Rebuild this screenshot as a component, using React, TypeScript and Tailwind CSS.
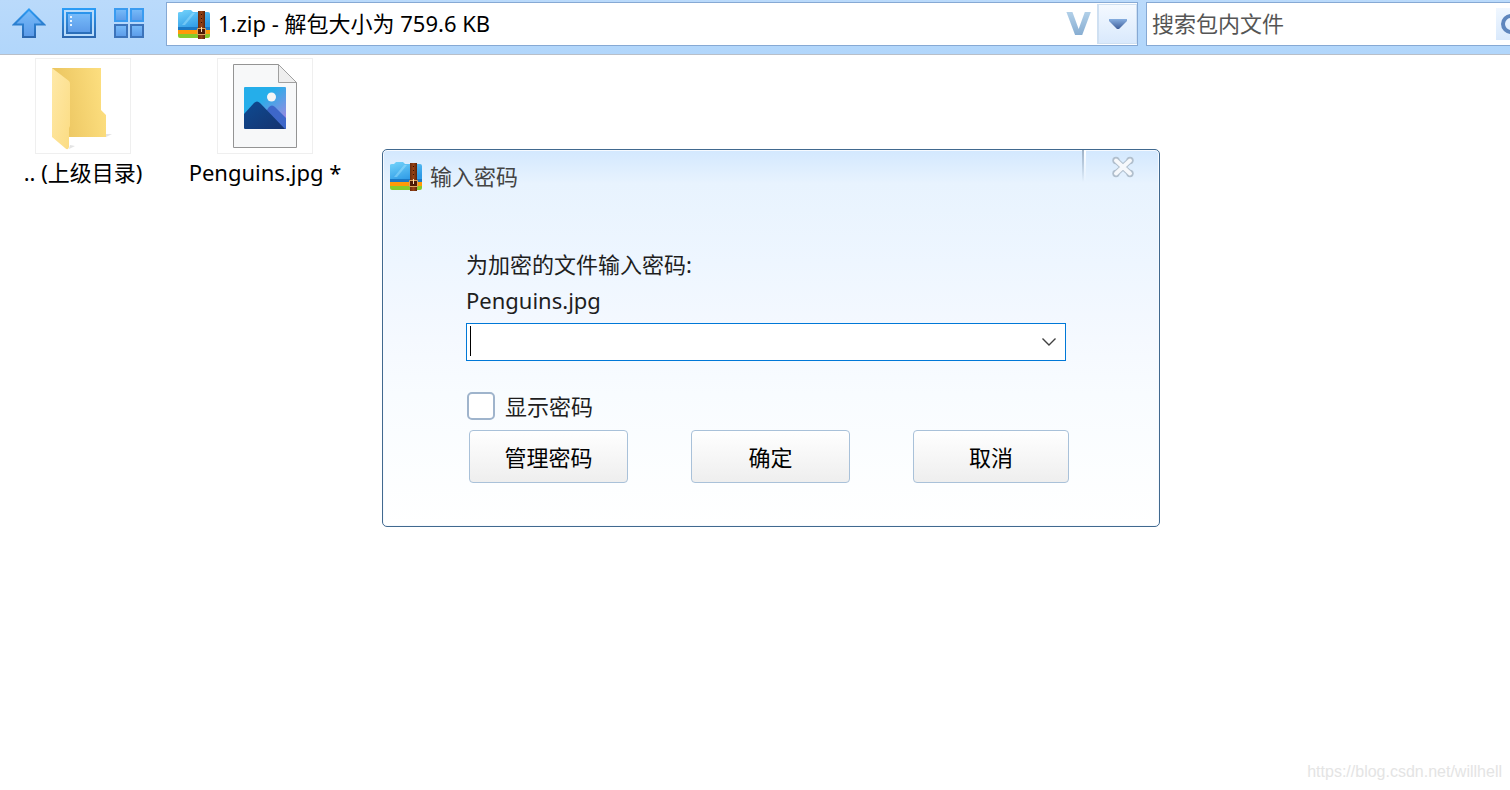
import React, { useState } from 'react';

const fontClass = "font-['Noto_Sans','Noto_Sans_CJK_SC',sans-serif]";

export default function App() {
  const [keyword, setKeyword] = useState('');

  return (
    <div className={`min-h-screen bg-white text-[22px] leading-9 text-black ${fontClass}`}>
      {/* Toolbar */}
      <header className="flex items-start overflow-hidden border-b border-[#b8bfc9] bg-linear-to-b from-[#badafb] to-[#b1d6fb] pt-[2px] pb-2 pl-3">
        <nav className="mt-[6px] flex gap-4">
          <button type="button" aria-label="向上" className="w-[34px]">
            <UpIcon />
          </button>
          <button type="button" aria-label="预览" className="w-[34px]">
            <PreviewIcon />
          </button>
          <button type="button" aria-label="视图" className="w-[34px]">
            <GridIcon />
          </button>
        </nav>

        <div className="ml-5 flex h-11 flex-1 items-center border border-[#86a9d4] bg-white pl-[11px]">
          <ZipIcon />
          <input
            aria-label="路径"
            className="ml-2 h-9 min-w-0 flex-1 bg-transparent pb-[2px] outline-none"
            defaultValue="1.zip - 解包大小为 759.6 KB"
          />
          <button
            type="button"
            className="mr-[6px] bg-linear-to-b from-[#bdd9ee] to-[#7ba3cb] bg-clip-text font-['DejaVu_Sans',sans-serif] text-[32px] leading-9 font-bold text-transparent"
          >
            V
          </button>
          <button
            type="button"
            aria-label="历史路径"
            className="flex h-10 w-10 items-center justify-center border border-l-2 border-[#cfe0f2] bg-linear-to-b from-[#f4f9ff] to-[#d9e9fc]"
          >
            <svg width="18" height="10" viewBox="0 0 18 10">
              <defs>
                <linearGradient id="caret" x1="0" y1="0" x2="0" y2="1">
                  <stop offset="0" stopColor="#86aee0" />
                  <stop offset="1" stopColor="#405f9a" />
                </linearGradient>
              </defs>
              <path d="M0 0H18V2L10 10H8L0 2Z" fill="url(#caret)" />
            </svg>
          </button>
        </div>

        <div className="ml-2 flex h-11 w-[364px] shrink-0 items-center border-y border-l border-[#86a9d4] bg-white pl-[5px]">
          <input
            aria-label="搜索"
            className="h-9 min-w-0 flex-1 bg-transparent pb-[2px] outline-none placeholder:text-[#555555]"
            placeholder="搜索包内文件"
            value={keyword}
            onChange={e => setKeyword(e.target.value)}
          />
          <button
            type="button"
            aria-label="开始搜索"
            className="h-8 w-[14px] overflow-hidden bg-linear-to-b from-[#f0f7ff] to-[#d9e9fc]"
          >
            <svg width="14" height="32" viewBox="0 0 14 32">
              <circle cx="15" cy="16" r="8" fill="none" stroke="#5f86bd" strokeWidth="4" />
            </svg>
          </button>
        </div>
      </header>

      {/* File list */}
      <main className="flex gap-4 pt-[3px]">
        <FileItem name=".. (上级目录)">
          <FolderIcon />
        </FileItem>
        <FileItem name="Penguins.jpg *">
          <ImageFileIcon />
        </FileItem>
      </main>

      <PasswordDialog />

      <footer className="absolute right-2 bottom-2 font-['Liberation_Sans',sans-serif] text-base leading-5 text-[#e4e4e4]">
        https://blog.csdn.net/willhell
      </footer>
    </div>
  );
}

function FileItem({ name, children }: { name: string; children: React.ReactNode }) {
  return (
    <div className="flex w-[166px] flex-col items-center">
      <div className="flex h-24 w-24 items-center justify-center border border-[#efefef]">{children}</div>
      <span className="whitespace-nowrap">{name}</span>
    </div>
  );
}

function PasswordDialog() {
  const [password, setPassword] = useState('');
  const [visible, setVisible] = useState(false);

  return (
    <section
      role="dialog"
      aria-labelledby="dialog-title"
      className="absolute top-[149px] left-[382px] w-[778px] rounded-[5px] border border-[#41698f] bg-[linear-gradient(to_bottom,#d3e8fe_0%,#e8f3fe_9%,#eef6ff_30%,#f5f9ff_50%,#f8fcff_65%,#ffffff_100%)] shadow-[inset_0_0_0_1px_#f6faff]"
    >
      <div className="flex h-[52px] items-start">
        <div className="flex h-[52px] items-center gap-2 pl-[7px] text-[#444444]">
          <ZipIcon />
          <h1 id="dialog-title">输入密码</h1>
        </div>
        <div className="ml-auto h-8 w-[2px] bg-linear-to-b from-[#9fb2c6] to-transparent" />
        <div className="h-8 w-[2px] bg-linear-to-b from-white to-transparent" />
        <button type="button" aria-label="关闭" className="flex h-[34px] w-[73px] items-center justify-center">
          <CloseIcon />
        </button>
      </div>

      <form className="px-[83px] pt-11 pb-[43px] text-[#1e1e1e]" onSubmit={e => e.preventDefault()}>
        <label htmlFor="password" className="block">
          为加密的文件输入密码:
          <br />
          Penguins.jpg
        </label>
        <div className="relative mt-[5px] flex h-[38px] w-[600px] items-center border border-[#0078d7] bg-white">
          <input
            id="password"
            type={visible ? 'text' : 'password'}
            className="h-full min-w-0 flex-1 bg-transparent px-1 caret-transparent outline-none"
            value={password}
            onChange={e => setPassword(e.target.value)}
          />
          {password === '' && <span className="absolute top-[2px] left-[3px] h-[30px] w-px bg-black" />}
          <button type="button" aria-label="选择密码" className="flex h-full w-8 items-center justify-center">
            <svg width="14" height="8" viewBox="0 0 14 8" fill="none" stroke="#404040" strokeWidth="1.4">
              <path d="M0.5 0.5L7 7L13.5 0.5" />
            </svg>
          </button>
        </div>

        <label className="mt-[31px] flex h-7 items-center gap-[10px] pl-px">
          <input
            type="checkbox"
            className="h-7 w-7 appearance-none rounded-[5px] border-2 border-[#9fb4cc] bg-white checked:bg-[#9fb4cc]"
            checked={visible}
            onChange={e => setVisible(e.target.checked)}
          />
          显示密码
        </label>

        <div className="mt-[10px] flex gap-[63px] pl-[3px] text-black">
          <DialogButton>管理密码</DialogButton>
          <DialogButton>确定</DialogButton>
          <DialogButton>取消</DialogButton>
        </div>
      </form>
    </section>
  );
}

function DialogButton({ children }: { children: React.ReactNode }) {
  return (
    <button
      type="button"
      className="h-[53px] w-[159px] rounded border border-[#a9c1d9] bg-linear-to-b from-white to-[#eeeeee] last:w-[156px]"
    >
      {children}
    </button>
  );
}

function UpIcon() {
  return (
    <svg width="34" height="30" viewBox="0 0 34 30">
      <defs>
        <linearGradient id="blueFill" x1="0" y1="0" x2="0" y2="1">
          <stop offset="0" stopColor="#78bcfa" />
          <stop offset="1" stopColor="#5b9ae8" />
        </linearGradient>
        <linearGradient id="blueLine" gradientUnits="userSpaceOnUse" x1="0" y1="0" x2="0" y2="30">
          <stop offset="0" stopColor="#2b9df8" />
          <stop offset="1" stopColor="#2b65ad" />
        </linearGradient>
      </defs>
      <path d="M17 1.5L32 16.5H23V29H11V16.5H2Z" fill="url(#blueFill)" stroke="url(#blueLine)" strokeWidth="2" />
    </svg>
  );
}

function PreviewIcon() {
  return (
    <svg width="34" height="30" viewBox="0 0 34 30">
      <rect x="1" y="1" width="32" height="28" fill="#b9dcfb" stroke="url(#blueLine)" strokeWidth="2" />
      <rect x="5" y="5" width="24" height="20" fill="url(#blueFill)" stroke="url(#blueLine)" strokeWidth="2" />
      <path d="M8 8h2v2h-2zM8 12h2v2h-2zM8 16h2v2h-2z" fill="#e6f4ff" />
    </svg>
  );
}

function GridIcon() {
  return (
    <svg width="34" height="30" viewBox="0 0 34 30">
      <g fill="url(#blueFill)" strokeWidth="2">
        <path d="M3 1h12v12h-12zM19 1h12v12h-12z" stroke="#3a9bf0" />
        <path d="M3 17h12v12h-12zM19 17h12v12h-12z" stroke="#3c74bb" />
      </g>
    </svg>
  );
}

function ZipIcon() {
  return (
    <svg width="32" height="29" viewBox="0 0 32 29" className="shrink-0">
      <defs>
        <linearGradient id="zipBlue" x1="0" y1="0" x2="0.6" y2="1">
          <stop offset="0" stopColor="#74d4fb" />
          <stop offset="1" stopColor="#2f9be6" />
        </linearGradient>
        <linearGradient id="strap" x1="0" y1="0" x2="1" y2="0">
          <stop offset="0" stopColor="#6b2c0c" />
          <stop offset="0.5" stopColor="#964316" />
          <stop offset="1" stopColor="#5c2408" />
        </linearGradient>
      </defs>
      <path d="M0 23H32V26Q32 28 30 28H2Q0 28 0 26Z" fill="#86cb2c" />
      <path d="M0 20H32V24H0Z" fill="#ff9a08" />
      <path d="M0 3Q0 2 2 2H4L6 0H13L15 2H30Q32 2 32 4V17H0Z" fill="url(#zipBlue)" />
      <path d="M0 17H32V20H0Z" fill="#1b78c4" />
      <path d="M14 3H17L7 15H4Z" fill="#a5e4ff" opacity="0.45" />
      <path d="M20 1H27V29H20Z" fill="url(#strap)" />
      <path d="M23 4h1v1h-1zM23 8h1v1h-1zM23 12h1v1h-1z" fill="#2e0f02" />
      <path d="M19.5 18.5H27.500V24.500H19.5Z" fill="#4d1a05" stroke="#dba45c" />
      <path d="M23 17H24V22H23Z" fill="#ffe2b8" />
    </svg>
  );
}

function CloseIcon() {
  return (
    <svg width="24" height="22" viewBox="0 0 24 22" fill="none" strokeLinecap="round">
      <path d="M5 4.5L19 17.5M19 4.5L5 17.5" stroke="#b1bfcd" strokeWidth="6" />
      <g fill="#b1bfcd">
        <circle cx="5" cy="4.5" r="3.7" />
        <circle cx="19" cy="4.5" r="3.7" />
        <circle cx="5" cy="17.5" r="3.7" />
        <circle cx="19" cy="17.5" r="3.7" />
      </g>
      <path d="M5 4.5L19 17.5M19 4.5L5 17.5" stroke="#f6f8fb" strokeWidth="4" />
    </svg>
  );
}

function FolderIcon() {
  return (
    <svg width="94" height="94" viewBox="0 0 94 94">
      <defs>
        <linearGradient id="folderBack" x1="0" y1="0.6" x2="1" y2="0.4">
          <stop offset="0" stopColor="#e9c25c" />
          <stop offset="1" stopColor="#fddf80" />
        </linearGradient>
        <linearGradient id="folderFront" x1="0" y1="0" x2="1" y2="1">
          <stop offset="0" stopColor="#ffe9a8" />
          <stop offset="1" stopColor="#fbdc83" />
        </linearGradient>
      </defs>
      <path d="M70 78L76 75L70 75ZM33 90L39 87L34 86Z" fill="#e4e4e4" />
      <path d="M16 9H65V51L70 56V78H16Z" fill="url(#folderBack)" />
      <path d="M16 9L33 22Q34 23 34 25V67L33 69V88Q32 92 29 89L16 78Z" fill="url(#folderFront)" />
    </svg>
  );
}

function ImageFileIcon() {
  return (
    <svg width="94" height="94" viewBox="0 0 94 94">
      <defs>
        <linearGradient id="sky" x1="0.4" y1="0.3" x2="1" y2="1">
          <stop offset="0" stopColor="#25aeea" />
          <stop offset="0.6" stopColor="#7f93e3" />
          <stop offset="1" stopColor="#b777dd" />
        </linearGradient>
        <linearGradient id="hill" x1="0" y1="0" x2="1" y2="1">
          <stop offset="0" stopColor="#0d4b92" />
          <stop offset="1" stopColor="#16336f" />
        </linearGradient>
      </defs>
      <path d="M15.5 5.5H60.5L78.5 23.5V88.5H15.5Z" fill="#f7f8f9" stroke="#949494" />
      <path d="M60.5 5.5V23.5H78.5Z" fill="#eeeeee" stroke="#a0a0a0" />
      <rect x="26" y="28" width="42" height="42" rx="1" fill="url(#sky)" />
      <circle cx="53.5" cy="38" r="4.5" fill="#f5f5f5" />
      <path d="M47 54L51 48Q54 45 57 48L68 59V70H58Z" fill="#3e67c9" />
      <path d="M26 55L36 44Q39 41 42 44L67 70H27L26 69Z" fill="url(#hill)" />
    </svg>
  );
}
